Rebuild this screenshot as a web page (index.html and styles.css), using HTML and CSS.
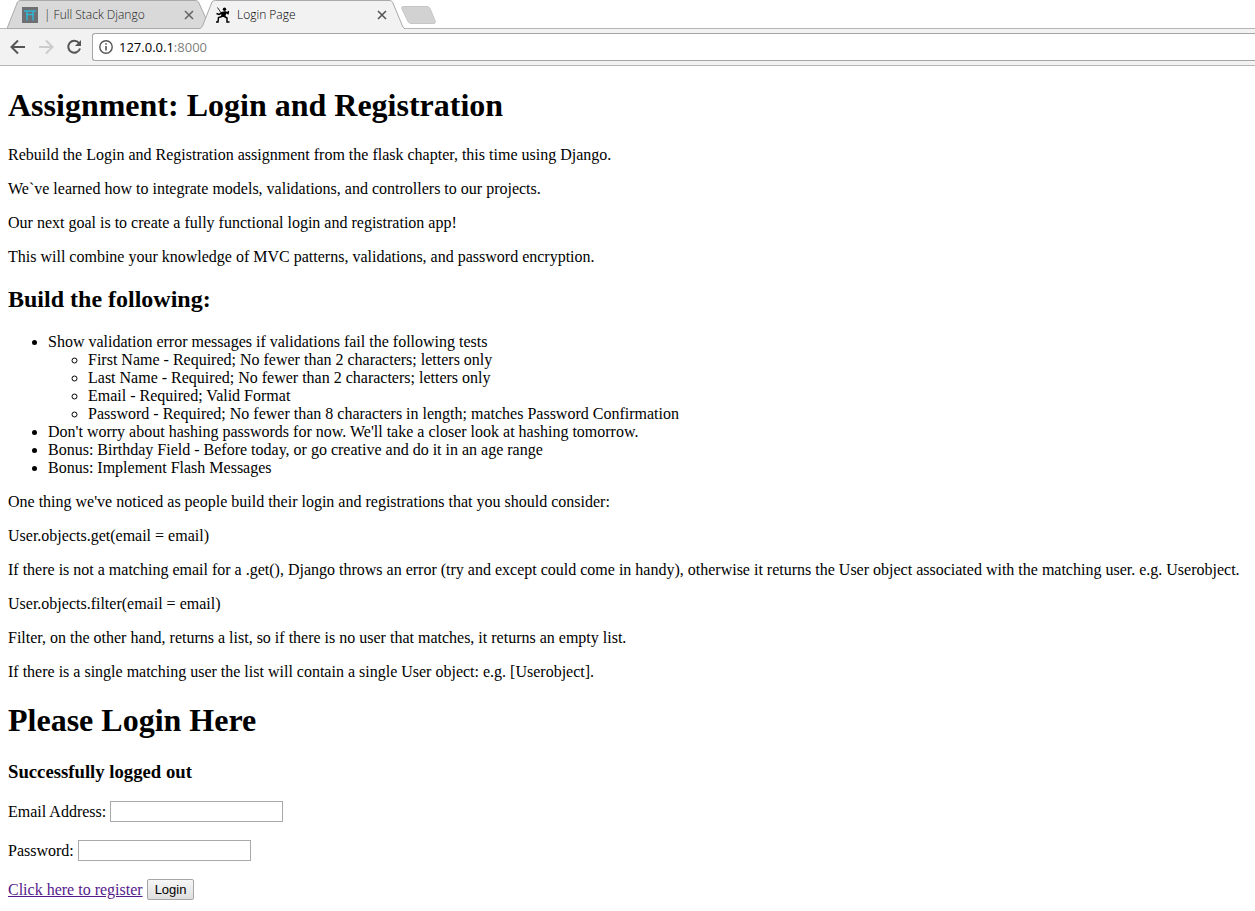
FILE: index.html
```html
<!DOCTYPE html>
<html lang="en">
<head>
<meta charset="utf-8">
<title>Login Page</title>
<link rel="stylesheet" href="styles.css">
</head>
<body>
<header class="browser">
  <nav class="tabs" aria-label="Tabs">
    <div class="tab">
      <svg class="tab-shape" width="202" height="29" viewBox="0 0 202 29" aria-hidden="true"><path d="M0 28.500 L10.500 2 Q11.500 .5 14 .5 H188 Q190.500 .5 191.500 2 L200 21 L196.500 28.500Z" fill="#d9d9d9" stroke="#a9a9a9"/></svg>
      <svg class="favicon" width="16" height="16" viewBox="0 0 16 16" aria-hidden="true"><path fill="#6d6f72" d="M0 0h16v16H0z"/><path d="M2 4h12M4 7.500h8M5 4v9.500M11 4v9.500" fill="none" stroke="#35b3d2" stroke-width="1.500"/></svg>
      <span class="tab-title">| Full Stack Django</span>
      <button class="close" aria-label="Close Full Stack Django"><svg width="10" height="10" viewBox="0 0 10 10"><path d="M1 1l8 8M9 1L1 9" stroke="#666" stroke-width="1.600"/></svg></button>
    </div>
    <div class="tab active">
      <svg class="tab-shape" width="206" height="29" viewBox="0 0 206 29" aria-hidden="true"><path d="M0 29 Q2.500 28 3.500 26 L13 2 Q14 .5 16.500 .5 H190 Q192.500 .5 193.500 2 L203.500 26 Q204.500 28 206 29" fill="#f2f2f2" stroke="#a9a9a9"/></svg>
      <svg class="favicon" width="16" height="16" viewBox="0 0 16 16" aria-hidden="true"><circle cx="9.500" cy="2.300" r="1.700"/><path d="M2.500 .5L6.500 6.500" stroke="#000" stroke-width=".8"/><path d="M6.500 5L10.500 4l1 2-1.500 4H6z"/><path d="M7.500 5.500L4 7.500 1.500 6.500M10.500 5L13 6.500l.5-2.500M7 9.500L3.500 10.500 3 15H1M9.500 9.500l2.500 1.500v4h2.500" fill="none" stroke="#000" stroke-width="1.500"/></svg>
      <span class="tab-title">Login Page</span>
      <button class="close" aria-label="Close Login Page"><svg width="10" height="10" viewBox="0 0 10 10"><path d="M1 1l8 8M9 1L1 9" stroke="#555" stroke-width="1.600"/></svg></button>
    </div>
    <button class="new-tab" aria-label="New tab"><svg width="35" height="18" viewBox="0 0 35 18"><path d="M2 .5h24q2 0 3 2l5 12q1 3-1 3H10q-2 0-3-2L1 3Q0 .5 2 .5Z" fill="#d2d2d2" stroke="#c6c6c6"/></svg></button>
  </nav>
  <div class="toolbar">
    <button class="tool" aria-label="Back"><svg width="16" height="16" viewBox="0 0 16 16"><path d="M15 8H2M8 1.500L1.500 8 8 14.500" fill="none" stroke="#555" stroke-width="2"/></svg></button>
    <button class="tool" aria-label="Forward"><svg width="16" height="16" viewBox="0 0 16 16"><path d="M1 8h13M8 1.500L14.500 8 8 14.500" fill="none" stroke="#ccc" stroke-width="2"/></svg></button>
    <button class="tool" aria-label="Reload"><svg width="16" height="16" viewBox="0 0 16 16"><path d="M13 4A6 6 0 1 0 14 9.500" fill="none" stroke="#555" stroke-width="2"/><path d="M15 1v6H9z" fill="#555"/></svg></button>
    <div class="address">
      <svg width="14" height="14" viewBox="0 0 14 14" aria-hidden="true"><circle cx="7" cy="7" r="6.200" fill="none" stroke="#555" stroke-width="1.400"/><path d="M7 6v4.500M7 3.200v1.600" stroke="#555" stroke-width="1.600"/></svg>
      <span class="url">127.0.0.1<span class="port">:8000</span></span>
    </div>
  </div>
</header>
<main class="page">
  <h1>Assignment: Login and Registration</h1>
  <p>Rebuild the Login and Registration assignment from the flask chapter, this time using Django.</p>
  <p>We`ve learned how to integrate models, validations, and controllers to our projects.</p>
  <p>Our next goal is to create a fully functional login and registration app!</p>
  <p>This will combine your knowledge of MVC patterns, validations, and password encryption.</p>
  <h2>Build the following:</h2>
  <ul>
    <li>Show validation error messages if validations fail the following tests
      <ul>
        <li>First Name - Required; No fewer than 2 characters; letters only</li>
        <li>Last Name - Required; No fewer than 2 characters; letters only</li>
        <li>Email - Required; Valid Format</li>
        <li>Password - Required; No fewer than 8 characters in length; matches Password Confirmation</li>
      </ul>
    </li>
    <li>Don't worry about hashing passwords for now. We'll take a closer look at hashing tomorrow.</li>
    <li>Bonus: Birthday Field - Before today, or go creative and do it in an age range</li>
    <li>Bonus: Implement Flash Messages</li>
  </ul>
  <p>One thing we've noticed as people build their login and registrations that you should consider:</p>
  <p>User.objects.get(email = email)</p>
  <p>If there is not a matching email for a .get(), Django throws an error (try and except could come in handy), otherwise it returns the User object associated with the matching user. e.g. Userobject.</p>
  <p>User.objects.filter(email = email)</p>
  <p>Filter, on the other hand, returns a list, so if there is no user that matches, it returns an empty list.</p>
  <p>If there is a single matching user the list will contain a single User object: e.g. [Userobject].</p>
  <h1>Please Login Here</h1>
  <h3>Successfully logged out</h3>
  <form class="login">
    <div class="row"><label for="email">Email Address:</label><input class="field" id="email" type="text"></div>
    <div class="row"><label for="password">Password:</label><input class="field" id="password" type="password"></div>
    <div class="row"><a class="register" href="#register">Click here to register</a><button class="submit" type="submit">Login</button></div>
  </form>
</main>
</body>
</html>
```

FILE: styles.css
```css
* { box-sizing: border-box; }
body { margin: 0; background: #fff; color: #000; font: 16px/18px "Liberation Serif", "Times New Roman", serif; }
button { padding: 0; border: 0; background: none; }
svg { display: block; }

.browser { font-family: "Open Sans", "Noto Sans", sans-serif; font-size: 12px; }
.tabs { display: flex; height: 29px; padding-left: 7px; box-shadow: inset 0 -1px #b5b5b5; }
.tab { position: relative; display: flex; align-items: center; width: 192px; height: 29px; padding: 0 5px 0 15px; color: #222; }
.tab.active { z-index: 1; width: 198px; padding: 0 10px 0 16px; color: #000; }
.tab-shape { position: absolute; inset: 0 auto auto 0; }
.favicon, .tab-title, .close { position: relative; }
.tab-title { flex: 1; margin-left: 6px; white-space: nowrap; font-weight: 300; }
.close { width: 10px; height: 10px; }
.new-tab { align-self: center; margin-left: 4px; }
.toolbar { display: flex; align-items: center; gap: 12px; height: 37px; padding-left: 10px; background: #f2f2f2; border-bottom: 1px solid #b5b5b5; }
.address { display: flex; flex: 1; align-items: center; gap: 6px; height: 28px; margin-left: -2px; padding-left: 6px; background: #fff; border: 1px solid #a6a6a6; border-right: 0; border-radius: 3px 0 0 3px; font-size: 13px; }
.port { color: #808080; }

.page { padding: 0 8px 10px; display: flow-root; }
h1 { margin: 21px 0 22px; font-size: 32px; line-height: 37px; }
h2 { margin: 20px 0; font-size: 24px; line-height: 27px; }
h3 { margin: 21px 0 19px; line-height: 21px; }
p { margin: 16px 0; }
ul { margin: 16px 0; padding-left: 40px; }
ul ul { margin: 0; }
.login { display: grid; gap: 18px; }
.row { display: flex; align-items: center; gap: 4px; height: 21px; }
.field { width: 173px; height: 21px; border: 1px solid #a9a9a9; background: #fff; }
.register { color: #551a8b; }
.submit { height: 21px; padding: 0 7px; border: 1px solid #a6a6a6; border-radius: 2px; background: linear-gradient(#f6f6f6, #dedede); color: #000; font: 13px/18px "Liberation Sans", Arial, sans-serif; }
```
